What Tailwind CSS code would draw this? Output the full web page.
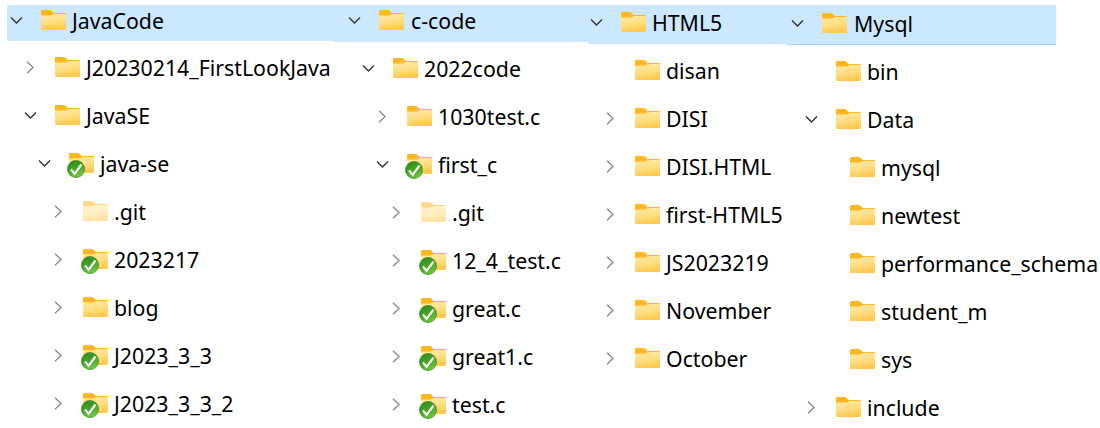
<!DOCTYPE html>
<html lang="en">
  <head>
    <meta charset="UTF-8" />
    <title>Folders</title>
    <script src="https://cdn.jsdelivr.net/npm/@tailwindcss/browser@4"></script>
  </head>
  <body class="bg-white w-[1100px] h-[428px] overflow-hidden font-['Noto_Sans',sans-serif] text-[21.3px] leading-none text-black">
    <!-- shared icons -->
    <svg class="absolute w-0 h-0" xmlns="http://www.w3.org/2000/svg">
      <defs>
        <linearGradient id="body" x1="0" y1="0" x2="0.25" y2="1">
          <stop offset="0" stop-color="#ffeaa6" />
          <stop offset="0.55" stop-color="#ffdf85" />
          <stop offset="1" stop-color="#fdc94f" />
        </linearGradient>
        <linearGradient id="ball" x1="0.2" y1="0" x2="0.7" y2="1">
          <stop offset="0" stop-color="#2c8a1e" />
          <stop offset="0.55" stop-color="#4aa82a" />
          <stop offset="1" stop-color="#79cb45" />
        </linearGradient>
      </defs>
      <symbol id="folder" viewBox="0 0 25 20" overflow="visible">
        <path d="M1 0h8.5l3.5 3h11a1 1 0 0 1 1 1v3H0V1a1 1 0 0 1 1-1z" fill="#fcb721" />
        <path d="M0 5.5h10.5L13 4h11a1 1 0 0 1 1 1v14a1 1 0 0 1-1 1H1a1 1 0 0 1-1-1z" fill="url(#body)" />
      </symbol>
      <symbol id="ok" viewBox="0 0 18 18" overflow="visible">
        <circle cx="9" cy="9" r="8.5" fill="url(#ball)" stroke="#3a8f25" stroke-width="0.8" />
        <path d="M4 9.5l3.6 4.3L14.5 4.5" fill="none" stroke="#fff" stroke-width="2.1" />
      </symbol>
      <symbol id="down" viewBox="0 0 13 13" overflow="visible">
        <path d="M1 3.5l5.5 5.5L12 3.5" fill="none" stroke="#333" stroke-width="1.4" />
      </symbol>
      <symbol id="right" viewBox="0 0 13 13" overflow="visible">
        <path d="M3 .7l6 5.8-6 5.8" fill="none" stroke="#8c8c8c" stroke-width="1.4" />
      </symbol>
    </svg>

    <div class="flex items-start">
      <!-- JavaCode -->
      <div class="w-[326px] ml-[7px] pt-[5px]">
        <div class="h-[36px] bg-[#cce8ff] flex items-start pt-[5px] pl-[3px]">
          <svg class="w-[13px] h-[13px] mt-[4px]"><use href="#down" /></svg>
          <svg class="w-[25px] h-[20px] ml-[18px] overflow-visible"><use href="#folder" /></svg>
          <span class="ml-[6px] h-[20px] flex items-center pt-[2px]">JavaCode</span>
        </div>
        <div class="mt-[2px]">
          <div class="h-[48px] flex items-center pl-[17px]">
            <svg class="w-[13px] h-[13px]"><use href="#right" /></svg>
            <svg class="w-[25px] h-[20px] ml-[18px] overflow-visible"><use href="#folder" /></svg>
            <span class="ml-[6px] pt-[2px]">J20230214_FirstLookJava</span>
          </div>
          <div class="h-[48px] flex items-center pl-[17px]">
            <svg class="w-[13px] h-[13px]"><use href="#down" /></svg>
            <svg class="w-[25px] h-[20px] ml-[18px] overflow-visible"><use href="#folder" /></svg>
            <span class="ml-[6px] pt-[2px]">JavaSE</span>
          </div>
          <div class="h-[48px] flex items-center pl-[31px]">
            <svg class="w-[13px] h-[13px]"><use href="#down" /></svg>
            <svg class="w-[25px] h-[20px] ml-[18px] overflow-visible"><use href="#folder" /><use href="#ok" x="-2" y="7" width="18" height="18" /></svg>
            <span class="ml-[6px] pt-[2px]">java-se</span>
          </div>
          <div class="h-[48px] flex items-center pl-[45px]">
            <svg class="w-[13px] h-[13px]"><use href="#right" /></svg>
            <svg class="w-[25px] h-[20px] ml-[18px] overflow-visible opacity-50"><use href="#folder" /></svg>
            <span class="ml-[6px] pt-[2px]">.git</span>
          </div>
          <div class="h-[48px] flex items-center pl-[45px]">
            <svg class="w-[13px] h-[13px]"><use href="#right" /></svg>
            <svg class="w-[25px] h-[20px] ml-[18px] overflow-visible"><use href="#folder" /><use href="#ok" x="-2" y="7" width="18" height="18" /></svg>
            <span class="ml-[6px] pt-[2px]">2023217</span>
          </div>
          <div class="h-[48px] flex items-center pl-[45px]">
            <svg class="w-[13px] h-[13px]"><use href="#right" /></svg>
            <svg class="w-[25px] h-[20px] ml-[18px] overflow-visible"><use href="#folder" /></svg>
            <span class="ml-[6px] pt-[2px]">blog</span>
          </div>
          <div class="h-[48px] flex items-center pl-[45px]">
            <svg class="w-[13px] h-[13px]"><use href="#right" /></svg>
            <svg class="w-[25px] h-[20px] ml-[18px] overflow-visible"><use href="#folder" /><use href="#ok" x="-2" y="7" width="18" height="18" /></svg>
            <span class="ml-[6px] pt-[2px]">J2023_3_3</span>
          </div>
          <div class="h-[48px] flex items-center pl-[45px]">
            <svg class="w-[13px] h-[13px]"><use href="#right" /></svg>
            <svg class="w-[25px] h-[20px] ml-[18px] overflow-visible"><use href="#folder" /><use href="#ok" x="-2" y="7" width="18" height="18" /></svg>
            <span class="ml-[6px] pt-[2px]">J2023_3_3_2</span>
          </div>
        </div>
      </div>

      <!-- c-code -->
      <div class="w-[255px] pt-[5px]">
        <div class="h-[37px] bg-[#cce8ff] flex items-start pt-[5px] pl-[15px]">
          <svg class="w-[13px] h-[13px] mt-[4px]"><use href="#down" /></svg>
          <svg class="w-[25px] h-[20px] ml-[18px] overflow-visible"><use href="#folder" /></svg>
          <span class="ml-[7px] h-[20px] flex items-center pt-[2px]">c-code</span>
        </div>
        <div class="mt-[2px]">
          <div class="h-[48px] flex items-center pl-[29px]">
            <svg class="w-[13px] h-[13px]"><use href="#down" /></svg>
            <svg class="w-[25px] h-[20px] ml-[18px] overflow-visible"><use href="#folder" /></svg>
            <span class="ml-[6px] pt-[2px]">2022code</span>
          </div>
          <div class="h-[48px] flex items-center pl-[43px]">
            <svg class="w-[13px] h-[13px]"><use href="#right" /></svg>
            <svg class="w-[25px] h-[20px] ml-[18px] overflow-visible"><use href="#folder" /></svg>
            <span class="ml-[6px] pt-[2px]">1030test.c</span>
          </div>
          <div class="h-[48px] flex items-center pl-[43px]">
            <svg class="w-[13px] h-[13px]"><use href="#down" /></svg>
            <svg class="w-[25px] h-[20px] ml-[18px] overflow-visible"><use href="#folder" /><use href="#ok" x="-2" y="7" width="18" height="18" /></svg>
            <span class="ml-[6px] pt-[2px]">first_c</span>
          </div>
          <div class="h-[48px] flex items-center pl-[57px]">
            <svg class="w-[13px] h-[13px]"><use href="#right" /></svg>
            <svg class="w-[25px] h-[20px] ml-[18px] overflow-visible opacity-50"><use href="#folder" /></svg>
            <span class="ml-[6px] pt-[2px]">.git</span>
          </div>
          <div class="h-[48px] flex items-center pl-[57px]">
            <svg class="w-[13px] h-[13px]"><use href="#right" /></svg>
            <svg class="w-[25px] h-[20px] ml-[18px] overflow-visible"><use href="#folder" /><use href="#ok" x="-2" y="7" width="18" height="18" /></svg>
            <span class="ml-[6px] pt-[2px]">12_4_test.c</span>
          </div>
          <div class="h-[48px] flex items-center pl-[57px]">
            <svg class="w-[13px] h-[13px]"><use href="#right" /></svg>
            <svg class="w-[25px] h-[20px] ml-[18px] overflow-visible"><use href="#folder" /><use href="#ok" x="-2" y="7" width="18" height="18" /></svg>
            <span class="ml-[6px] pt-[2px]">great.c</span>
          </div>
          <div class="h-[48px] flex items-center pl-[57px]">
            <svg class="w-[13px] h-[13px]"><use href="#right" /></svg>
            <svg class="w-[25px] h-[20px] ml-[18px] overflow-visible"><use href="#folder" /><use href="#ok" x="-2" y="7" width="18" height="18" /></svg>
            <span class="ml-[6px] pt-[2px]">great1.c</span>
          </div>
          <div class="h-[48px] flex items-center pl-[57px]">
            <svg class="w-[13px] h-[13px]"><use href="#right" /></svg>
            <svg class="w-[25px] h-[20px] ml-[18px] overflow-visible"><use href="#folder" /><use href="#ok" x="-2" y="7" width="18" height="18" /></svg>
            <span class="ml-[6px] pt-[2px]">test.c</span>
          </div>
        </div>
      </div>

      <!-- HTML5 -->
      <div class="w-[199px] pt-[5px]">
        <div class="h-[39px] bg-[#cce8ff] flex items-start pt-[7px] pl-[2px]">
          <svg class="w-[13px] h-[13px] mt-[4px]"><use href="#down" /></svg>
          <svg class="w-[25px] h-[20px] ml-[18px] overflow-visible"><use href="#folder" /></svg>
          <span class="ml-[6px] h-[20px] flex items-center pt-[2px]">HTML5</span>
        </div>
        <div class="mt-[2px]">
          <div class="h-[48px] flex items-center pl-[47px]">
            <svg class="w-[25px] h-[20px] overflow-visible"><use href="#folder" /></svg>
            <span class="ml-[6px] pt-[2px]">disan</span>
          </div>
          <div class="h-[48px] flex items-center pl-[16px]">
            <svg class="w-[13px] h-[13px]"><use href="#right" /></svg>
            <svg class="w-[25px] h-[20px] ml-[18px] overflow-visible"><use href="#folder" /></svg>
            <span class="ml-[6px] pt-[2px]">DISI</span>
          </div>
          <div class="h-[48px] flex items-center pl-[16px]">
            <svg class="w-[13px] h-[13px]"><use href="#right" /></svg>
            <svg class="w-[25px] h-[20px] ml-[18px] overflow-visible"><use href="#folder" /></svg>
            <span class="ml-[6px] pt-[2px]">DISI.HTML</span>
          </div>
          <div class="h-[48px] flex items-center pl-[16px]">
            <svg class="w-[13px] h-[13px]"><use href="#right" /></svg>
            <svg class="w-[25px] h-[20px] ml-[18px] overflow-visible"><use href="#folder" /></svg>
            <span class="ml-[6px] pt-[2px]">first-HTML5</span>
          </div>
          <div class="h-[48px] flex items-center pl-[16px]">
            <svg class="w-[13px] h-[13px]"><use href="#right" /></svg>
            <svg class="w-[25px] h-[20px] ml-[18px] overflow-visible"><use href="#folder" /></svg>
            <span class="ml-[6px] pt-[2px]">JS2023219</span>
          </div>
          <div class="h-[48px] flex items-center pl-[16px]">
            <svg class="w-[13px] h-[13px]"><use href="#right" /></svg>
            <svg class="w-[25px] h-[20px] ml-[18px] overflow-visible"><use href="#folder" /></svg>
            <span class="ml-[6px] pt-[2px]">November</span>
          </div>
          <div class="h-[48px] flex items-center pl-[16px]">
            <svg class="w-[13px] h-[13px]"><use href="#right" /></svg>
            <svg class="w-[25px] h-[20px] ml-[18px] overflow-visible"><use href="#folder" /></svg>
            <span class="ml-[6px] pt-[2px]">October</span>
          </div>
        </div>
      </div>

      <!-- Mysql -->
      <div class="w-[269px] pt-[5px]">
        <div class="h-[40px] bg-[#cce8ff] border-b border-[#99d1ff] flex items-start pt-[8px] pl-[4px]">
          <svg class="w-[13px] h-[13px] mt-[4px]"><use href="#down" /></svg>
          <svg class="w-[25px] h-[20px] ml-[18px] overflow-visible"><use href="#folder" /></svg>
          <span class="ml-[7px] h-[20px] flex items-center pt-[2px]">Mysql</span>
        </div>
        <div class="mt-[2px]">
          <div class="h-[48px] flex items-center pl-[49px]">
            <svg class="w-[25px] h-[20px] overflow-visible"><use href="#folder" /></svg>
            <span class="ml-[6px] pt-[2px]">bin</span>
          </div>
          <div class="h-[48px] flex items-center pl-[18px]">
            <svg class="w-[13px] h-[13px]"><use href="#down" /></svg>
            <svg class="w-[25px] h-[20px] ml-[18px] overflow-visible"><use href="#folder" /></svg>
            <span class="ml-[6px] pt-[2px]">Data</span>
          </div>
          <div class="h-[48px] flex items-center pl-[63px]">
            <svg class="w-[25px] h-[20px] overflow-visible"><use href="#folder" /></svg>
            <span class="ml-[6px] pt-[2px]">mysql</span>
          </div>
          <div class="h-[48px] flex items-center pl-[63px]">
            <svg class="w-[25px] h-[20px] overflow-visible"><use href="#folder" /></svg>
            <span class="ml-[6px] pt-[2px]">newtest</span>
          </div>
          <div class="h-[48px] flex items-center pl-[63px]">
            <svg class="w-[25px] h-[20px] overflow-visible"><use href="#folder" /></svg>
            <span class="ml-[6px] pt-[2px]">performance_schema</span>
          </div>
          <div class="h-[48px] flex items-center pl-[63px]">
            <svg class="w-[25px] h-[20px] overflow-visible"><use href="#folder" /></svg>
            <span class="ml-[6px] pt-[2px]">student_m</span>
          </div>
          <div class="h-[48px] flex items-center pl-[63px]">
            <svg class="w-[25px] h-[20px] overflow-visible"><use href="#folder" /></svg>
            <span class="ml-[6px] pt-[2px]">sys</span>
          </div>
          <div class="h-[48px] flex items-center pl-[18px]">
            <svg class="w-[13px] h-[13px]"><use href="#right" /></svg>
            <svg class="w-[25px] h-[20px] ml-[18px] overflow-visible"><use href="#folder" /></svg>
            <span class="ml-[6px] pt-[2px]">include</span>
          </div>
        </div>
      </div>
    </div>
  </body>
</html>
